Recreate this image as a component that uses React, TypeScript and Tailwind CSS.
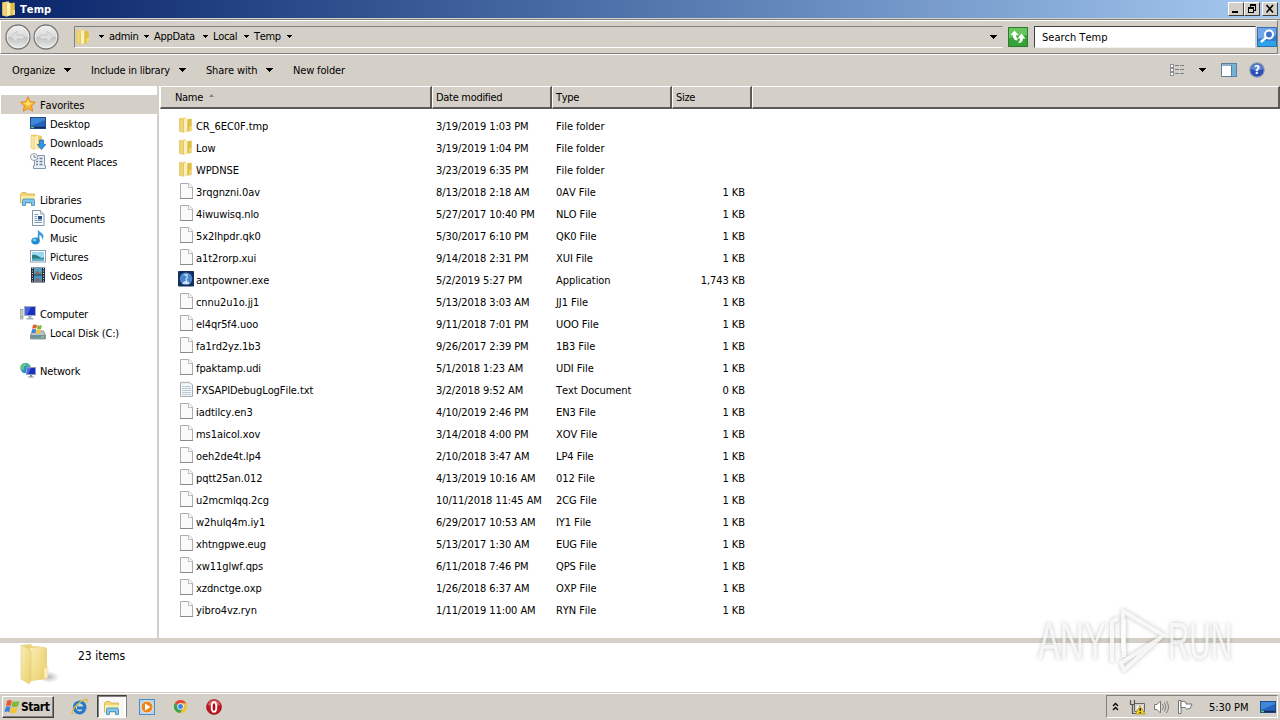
import React from "react";

type IconProps = { className?: string };
type IconC = (p: IconProps) => React.ReactElement;

const FolderIcon: IconC = ({ className = "" }) => (
  <svg viewBox="0 0 16 16" className={`h-4 w-4 shrink-0 ${className}`}>
    <path d="M6 3L13.500 1.500V14L6 15Z" fill="#e6c552" />
    <path d="M1.500 1.500L6 .5H8V15L6 15.500L1.500 14.500Z" fill="#f3dc83" />
    <path d="M6 2.500L9.500 1.500V14L6 15Z" fill="#fbf1bf" />
    <path d="M1.500 1.500L5.500 2.500V15.300L1.500 14.300Z" fill="#efd574" stroke="#d9bb58" strokeWidth=".5" />
    <path d="M9.500 2H13.500V13.800L9.500 14.200Z" fill="#e2be45" />
    <path d="M11.500 9H14V13.800H11.500Z" fill="#f1dc86" />
  </svg>
);

const PageIcon: IconC = ({ className = "" }) => (
  <svg viewBox="0 0 16 16" className={`h-4 w-4 shrink-0 ${className}`}>
    <path d="M2.500 .5H11L14.500 4V15.500H2.500Z" fill="#fafafa" stroke="#adadad" />
    <path d="M2 15.500H15" stroke="#8a8a8a" />
    <path d="M10.500 .500V4.500H14.500" fill="#fff" stroke="#bdbdbd" />
  </svg>
);

const TextFileIcon: IconC = ({ className = "" }) => (
  <svg viewBox="0 0 16 16" className={`h-4 w-4 shrink-0 ${className}`}>
    <path d="M2.500 1.500H12L14.500 4V15.500H2.500Z" fill="#f6f9fb" stroke="#a3a9ad" />
    <path d="M3 1.500H12" stroke="#c9c9c9" strokeDasharray="1 1" strokeWidth="2" />
    <path d="M4 5.500H13M4 7.500H13M4 9.500H13M4 11.500H13M4 13.500H13" stroke="#a9bcc9" strokeWidth=".8" />
  </svg>
);

const AppIcon: IconC = ({ className = "" }) => (
  <svg viewBox="0 0 16 16" className={`h-4 w-4 shrink-0 ${className}`}>
    <rect width="16" height="15.500" rx="1" fill="#142d5c" />
    <circle cx="8" cy="7.800" r="6.300" fill="#4a86ca" />
    <path d="M5.500 4Q8 1.800 10.500 4" stroke="#a6cdf0" fill="none" />
    <path d="M7 4.500Q9.500 4 9.300 6T8 8L8.700 10" stroke="#dcedfb" strokeWidth="1.100" fill="none" />
    <path d="M4.500 13Q5 10 8 10T11.500 13Z" fill="#cfe3f6" />
  </svg>
);

const StarIcon: IconC = () => (
  <svg viewBox="0 0 16 16" className="h-4 w-4 shrink-0">
    <path d="M8 .7L10.200 5.600L15.500 6.200L11.600 9.800L12.700 15.200L8 12.500L3.300 15.200L4.400 9.800L.500 6.200L5.800 5.600Z" fill="#fbb62e" stroke="#df8425" strokeWidth=".9" />
    <path d="M8 3L9.300 6.700L12.500 7L8 10L4 7L6.800 6.700Z" fill="#ffe36e" />
  </svg>
);

const DesktopIcon: IconC = ({ className = "" }) => (
  <svg viewBox="0 0 16 16" className={`h-4 w-4 shrink-0 ${className}`}>
    <rect x=".500" y="2.500" width="15" height="11" fill="#2462bd" stroke="#214a86" />
    <path d="M1 3H15V5L1 11Z" fill="#3f87d8" />
    <path d="M1 12.500H15" stroke="#152c58" strokeWidth="1.500" />
    <path d="M1 12.500H4" stroke="#67c276" strokeWidth="1.500" />
  </svg>
);

const DownloadsIcon: IconC = () => (
  <svg viewBox="0 0 16 16" className="h-4 w-4 shrink-0">
    <path d="M1 1L5 .5L12 2V14L5 15L1 14Z" fill="#eccb63" />
    <path d="M1 1L5 2.500V15.500L1 14Z" fill="#f7e59d" stroke="#d9bb58" strokeWidth=".5" />
    <path d="M5 2.500L8 1.500V14L5 15Z" fill="#fbf0bb" />
    <path d="M9.500 6H13.500V10.500H15.800L11.500 15.500L7.200 10.500H9.500Z" fill="#3294dd" stroke="#1b67ae" strokeWidth=".7" />
  </svg>
);

const RecentIcon: IconC = () => (
  <svg viewBox="0 0 16 16" className="h-4 w-4 shrink-0">
    <path d="M4.500 2.500H14.500V12.500H15.500V15.500H3.500V12.500H4.500Z" fill="#e8eef4" stroke="#8295a8" />
    <path d="M6 5.500H8M9.500 5.500H12.500M6 8.500H8M9.500 8.500H12.500M6 11.500H8M9.500 11.500H12.500" stroke="#6b8198" strokeWidth="1.300" />
    <circle cx="4" cy="4" r="3.500" fill="#f4f6f8" stroke="#91a0ae" />
    <path d="M4 2V4.300H6" fill="none" stroke="#586b7d" strokeWidth=".8" />
  </svg>
);

const LibrariesIcon: IconC = ({ className = "" }) => (
  <svg viewBox="0 0 16 16" className={`h-4 w-4 shrink-0 ${className}`}>
    <path d="M.5 3L2 1.500H6L7 3H14.500V12H.500Z" fill="#f0d776" stroke="#cfae4b" strokeWidth=".8" />
    <path d="M1 5H15V12H1Z" fill="#faeda8" />
    <path d="M2.500 14.500V9.500Q2.500 8 4 8H13Q14.500 8 14.500 9.500V14.500H11.500V11.500H5.500V14.500Z" fill="#7fc6ea" stroke="#3e8cbf" strokeWidth=".8" />
  </svg>
);

const DocumentIcon: IconC = () => (
  <svg viewBox="0 0 16 16" className="h-4 w-4 shrink-0">
    <path d="M2.500 .500H10.500L14 4V15.500H2.500Z" fill="#fbfdff" stroke="#8093a9" />
    <path d="M10.500 .500V4H14" fill="#dbe6f1" stroke="#8093a9" strokeWidth=".7" />
    <path d="M4.500 4.500H8.500M4.500 6.500H7M4.500 8.500H7M4.500 10.500H12M4.500 12.500H12" stroke="#7f9dbd" />
    <rect x="8" y="6" width="4" height="3.500" fill="#2b4f84" />
  </svg>
);

const MusicIcon: IconC = () => (
  <svg viewBox="0 0 16 16" className="h-4 w-4 shrink-0">
    <path d="M8 .5C9 3 13.500 4 13.500 7.500Q13.500 9 12 10.500Q12.500 7 9.500 6V12H7.500Z" fill="#3a9bd8" />
    <ellipse cx="5.500" cy="12" rx="4.200" ry="3.400" fill="#2089d2" />
    <ellipse cx="4.500" cy="11" rx="2" ry="1.400" fill="#7cc8f0" />
  </svg>
);

const PictureIcon: IconC = () => (
  <svg viewBox="0 0 16 16" className="h-4 w-4 shrink-0">
    <rect x=".500" y="2.500" width="15" height="11.500" fill="#fff" stroke="#8ea1b3" />
    <rect x="2" y="4" width="12" height="8.500" fill="#9bd8f1" />
    <path d="M2 7Q6 6 9 8.500T14 9V12.500H2Z" fill="#2d7d78" />
    <path d="M2 10.500H14V12.500H2Z" fill="#4cb0cd" />
  </svg>
);

const VideoIcon: IconC = () => (
  <svg viewBox="0 0 16 16" className="h-4 w-4 shrink-0">
    <rect x="1" y=".500" width="14" height="15" fill="#24303d" />
    <rect x="4" y="1" width="8" height="6.500" fill="#589fc4" />
    <rect x="4" y="8.500" width="8" height="6.500" fill="#4b94c6" />
    <path d="M5 6L7 3.500L9 6L11 5V7H5ZM5 13L7 10.500L11 13.500V14.500H5Z" fill="#8d6a5e" />
    <path d="M2.500 1V15M13.500 1V15" stroke="#d5e5ef" strokeDasharray="1 1.500" />
  </svg>
);

const ComputerIcon: IconC = () => (
  <svg viewBox="0 0 16 16" className="h-4 w-4 shrink-0">
    <rect x=".500" y="4.500" width="2.500" height="9.500" fill="#cbd5cb" stroke="#8d988d" strokeWidth=".7" />
    <path d="M1 11.500H2.500" stroke="#58b04f" />
    <rect x="4.500" y="1.500" width="11" height="9" fill="#1c2fc0" stroke="#a5afc4" />
    <path d="M5 2H11L7 10H5Z" fill="#4763df" />
    <path d="M8.500 11H11.500V13H13.500V14.500H6.500V13H8.500Z" fill="#a6afbd" />
  </svg>
);

const Flag: IconC = ({ className = "" }) => (
  <svg viewBox="0 0 16 16" className={`shrink-0 ${className}`}>
    <path d="M3.200 1.500Q5.500 .2 7.800 1.700L6.700 7Q4.500 5.800 2 7Z" fill="#e9592b" />
    <path d="M8.600 2.200Q11 3.400 15.500 2L14 7.300Q10.500 8.700 7.500 7.400Z" fill="#7dba37" />
    <path d="M1.800 7.900Q4.200 6.800 6.500 8L5.300 13.200Q3 12 .300 13.200Z" fill="#3f83d9" />
    <path d="M7.300 8.500Q10 9.800 13.600 8.300L12 13.600Q9 15 6.100 13.700Z" fill="#f6c32c" />
  </svg>
);

const DiskIcon: IconC = () => (
  <svg viewBox="0 0 16 16" className="h-4 w-4 shrink-0">
    <path d="M2.500 7H13.500L15.500 11V15H.500V11Z" fill="#b9c3c8" stroke="#74858d" strokeWidth=".8" />
    <path d="M1 11H15V14.600H1Z" fill="#6f9198" />
    <path d="M11 13H14" stroke="#7be067" strokeWidth="1.300" />
    <path d="M3 1Q5 0 7 1L6.300 4.500Q4.500 4 2.200 4.700Z" fill="#e9592b" />
    <path d="M7.500 1.300Q9.500 2.200 12 1L11 5Q9 5.800 6.900 4.900Z" fill="#7dba37" />
    <path d="M2 5.300Q4 4.500 6 5.300L5.300 9H1.500Z" fill="#3f83d9" />
    <path d="M6.700 5.600Q9 6.500 11 5.600L10 9.300H6Z" fill="#f6c32c" />
  </svg>
);

const NetworkIcon: IconC = () => (
  <svg viewBox="0 0 16 16" className="h-4 w-4 shrink-0">
    <circle cx="5.500" cy="6" r="5.200" fill="#2a8fc9" />
    <path d="M1 4Q3 .500 6 1L7 3L4 5L3 9Q0 7 1 4ZM7 1L10 3L8 5Z" fill="#64c77a" />
    <rect x="6.500" y="5.500" width="9" height="7" fill="#1a2fc6" stroke="#8f9dbb" />
    <path d="M7 6H11L8 12H7Z" fill="#536ce0" />
    <path d="M10 13H12V14.500H14V15.500H8V14.500H10Z" fill="#8893a8" />
  </svg>
);

function Caret({ className = "" }: IconProps) {
  return (
    <svg viewBox="0 0 7 4" className={`h-1 w-[7px] shrink-0 ${className}`} shapeRendering="crispEdges">
      <path d="M0 0H7V1H6V2H5V3H4V4H3V3H2V2H1V1H0Z" fill="#000" />
    </svg>
  );
}

function SmallCaret() {
  return (
    <svg viewBox="0 0 5 3" className="h-[3px] w-[5px] shrink-0" shapeRendering="crispEdges">
      <path d="M0 0H5V1H4V2H3V3H2V2H1V1H0Z" fill="#000" />
    </svg>
  );
}

function NavButton({ back }: { back?: boolean }) {
  return (
    <svg viewBox="0 0 26 26" className="h-[26px] w-[26px] shrink-0">
      <defs>
        <linearGradient id={back ? "nb" : "nf"} x1="0" y1="0" x2="0" y2="1">
          <stop offset="0" stopColor="#f1f1f0" />
          <stop offset=".48" stopColor="#dadada" />
          <stop offset=".52" stopColor="#c3c3c2" />
          <stop offset="1" stopColor="#ececeb" />
        </linearGradient>
      </defs>
      <circle cx="13" cy="13" r="12" fill={back ? "url(#nb)" : "url(#nf)"} stroke="#77777a" strokeWidth="1.300" />
      <circle cx="13" cy="13" r="10.800" fill="none" stroke="#f3f3f3" strokeWidth=".8" />
      <path
        d={back ? "M6 13L12 7V11H19V15H12V19Z" : "M20 13L14 7V11H7V15H14V19Z"}
        fill="#dedede"
        stroke="#c2c2c2"
        strokeWidth=".8"
      />
    </svg>
  );
}

const files: [string, string, string, string][] = [
  ["CR_6EC0F.tmp", "3/19/2019 1:03 PM", "File folder", ""],
  ["Low", "3/19/2019 1:04 PM", "File folder", ""],
  ["WPDNSE", "3/23/2019 6:35 PM", "File folder", ""],
  ["3rqgnzni.0av", "8/13/2018 2:18 AM", "0AV File", "1 KB"],
  ["4iwuwisq.nlo", "5/27/2017 10:40 PM", "NLO File", "1 KB"],
  ["5x2lhpdr.qk0", "5/30/2017 6:10 PM", "QK0 File", "1 KB"],
  ["a1t2rorp.xui", "9/14/2018 2:31 PM", "XUI File", "1 KB"],
  ["antpowner.exe", "5/2/2019 5:27 PM", "Application", "1,743 KB"],
  ["cnnu2u1o.jj1", "5/13/2018 3:03 AM", "JJ1 File", "1 KB"],
  ["el4qr5f4.uoo", "9/11/2018 7:01 PM", "UOO File", "1 KB"],
  ["fa1rd2yz.1b3", "9/26/2017 2:39 PM", "1B3 File", "1 KB"],
  ["fpaktamp.udi", "5/1/2018 1:23 AM", "UDI File", "1 KB"],
  ["FXSAPIDebugLogFile.txt", "3/2/2018 9:52 AM", "Text Document", "0 KB"],
  ["iadtilcy.en3", "4/10/2019 2:46 PM", "EN3 File", "1 KB"],
  ["ms1aicol.xov", "3/14/2018 4:00 PM", "XOV File", "1 KB"],
  ["oeh2de4t.lp4", "2/10/2018 3:47 AM", "LP4 File", "1 KB"],
  ["pqtt25an.012", "4/13/2019 10:16 AM", "012 File", "1 KB"],
  ["u2mcmlqq.2cg", "10/11/2018 11:45 AM", "2CG File", "1 KB"],
  ["w2hulq4m.iy1", "6/29/2017 10:53 AM", "IY1 File", "1 KB"],
  ["xhtngpwe.eug", "5/13/2017 1:30 AM", "EUG File", "1 KB"],
  ["xw11glwf.qps", "6/11/2018 7:46 PM", "QPS File", "1 KB"],
  ["xzdnctge.oxp", "1/26/2018 6:37 AM", "OXP File", "1 KB"],
  ["yibro4vz.ryn", "1/11/2019 11:00 AM", "RYN File", "1 KB"],
];

function fileIcon(type: string): IconC {
  if (type === "File folder") return FolderIcon;
  if (type === "Application") return AppIcon;
  if (type === "Text Document") return TextFileIcon;
  return PageIcon;
}

const tree: ([string, IconC, boolean] | null)[] = [
  ["Favorites", StarIcon, true],
  ["Desktop", DesktopIcon, false],
  ["Downloads", DownloadsIcon, false],
  ["Recent Places", RecentIcon, false],
  null,
  ["Libraries", LibrariesIcon, true],
  ["Documents", DocumentIcon, false],
  ["Music", MusicIcon, false],
  ["Pictures", PictureIcon, false],
  ["Videos", VideoIcon, false],
  null,
  ["Computer", ComputerIcon, true],
  ["Local Disk (C:)", DiskIcon, false],
  null,
  ["Network", NetworkIcon, true],
];

function WinButton({ children, className = "" }: { children: React.ReactNode; className?: string }) {
  return (
    <div className={`flex h-[14px] w-4 items-center justify-center border border-t-white border-r-[#404040] border-b-[#404040] border-l-white bg-[#d4d0c8] ${className}`}>
      <svg viewBox="0 0 12 12" className="h-3 w-3" fill="none" stroke="#000" shapeRendering="crispEdges">{children}</svg>
    </div>
  );
}

function TitleBar() {
  return (
    <div className="flex h-[18px] items-center bg-linear-to-r from-[#0a246a] to-[#a6caf0] pr-0.5 pl-px">
      <FolderIcon />
      <span className="mt-0.5 ml-[3px] flex-1 text-[11px] font-bold text-white tracking-[0.1px]">Temp</span>
      <WinButton><path d="M2 9H8" strokeWidth="2" /></WinButton>
      <WinButton>
        <path d="M4 2H10M4.500 2V4M9.500 2V7.500H8" strokeWidth="1" /><path d="M4 2H10M2 5H8" strokeWidth="2" /><path d="M2.500 5V9.500H7.500V5" />
      </WinButton>
      <WinButton className="ml-0.5"><path d="M2.500 2L9 9.500M9 2L2.500 9.500" strokeWidth="1.600" shapeRendering="auto" /></WinButton>
    </div>
  );
}

function AddressBar() {
  return (
    <div className="flex h-[36px] border-t border-b border-t-[#808080] border-b-white">
      <div className="flex flex-1 items-center border border-t-white border-r-[#808080] border-b-[#808080] border-l-white pl-1">
        <div className="flex w-[69px] gap-0.5">
          <NavButton back />
          <NavButton />
        </div>
        <div className="flex h-[22px] flex-1 items-center border border-t-[#808080] border-r-[#d4d0c8] border-b-white border-l-[#808080]">
          <FolderIcon />
          <div className="ml-2 grid grid-cols-[10px_45px_59px_41px_43px] items-center">
            <SmallCaret />
            {["admin", "AppData", "Local", "Temp"].map((t) => (
              <div key={t} className="flex items-center justify-between pr-[5px]">
                <span>{t}</span>
                <SmallCaret />
              </div>
            ))}
          </div>
          <Caret className="mr-[5px] ml-auto" />
        </div>
        <div className="ml-[5px] h-5 w-5 border border-[#2d7b2e] bg-[#36a238]">
          <svg viewBox="0 0 18 18" className="h-[18px] w-[18px]">
            <path d="M0 0H18V7L0 10Z" fill="#68c45d" />
            <path d="M5.500 2.500L1.500 7H4V9Q5 12.500 8.500 12.500V10Q7 10 7 7H9.500ZM12.500 5.500L8.500 10.500H11Q11 14 9 15Q14 15 14 10.500H16.500Z" fill="#fff" />
          </svg>
        </div>
        <div className="ml-[6px] flex h-[22px] w-[222px] items-center border border-t-[#404040] border-r-[#d4d0c8] border-b-[#f4f2ee] border-l-[#404040] bg-white pl-[7px]">
          <span className="mt-0.5 tracking-[0px]">Search Temp</span>
        </div>
        <div className="ml-px h-5 w-5 bg-[#357bd6]">
          <svg viewBox="0 0 20 20" className="h-5 w-5">
            <path d="M0 0H20V8L0 12Z" fill="#6fa7ea" />
            <path d="M0 14H20V20H0Z" fill="#2da3e7" />
            <circle cx="12" cy="7.500" r="4" fill="#3c73cf" stroke="#fff" strokeWidth="2" />
            <path d="M9 10.500L4 15" stroke="#fff" strokeWidth="2.400" />
            <path d="M.5 .500H19.500V19.500H.500Z" fill="none" stroke="#295ea9" strokeWidth=".8" />
          </svg>
        </div>
      </div>
      <div className="w-[2px]" />
    </div>
  );
}

function Toolbar() {
  return (
    <div className="flex h-[31px] items-center pr-[15px] pl-3 tracking-[-0.16px]">
      <div className="flex w-[79px] items-center"><span className="w-[52px]">Organize</span><Caret /></div>
      <div className="flex w-[115px] items-center"><span className="w-[88px] whitespace-nowrap tracking-[-0.24px]">Include in library</span><Caret /></div>
      <div className="flex w-[87px] items-center"><span className="w-[60px] whitespace-nowrap">Share with</span><Caret /></div>
      <span>New folder</span>
      <svg viewBox="0 0 16 14" className="ml-auto h-[14px] w-4" shapeRendering="crispEdges">
        <path d="M.500 1.500H3.500V4.500H.500ZM.500 5.500H3.500V8.500H.500ZM.500 9.500H3.500V12.500H.500Z" fill="#fff" stroke="#8a8f9a" />
        <path d="M5 2.500H15M5 6.500H15M5 10.500H15" stroke="#7a7f88" strokeDasharray="4 1" />
      </svg>
      <Caret className="ml-[13px]" />
      <svg viewBox="0 0 16 14" className="ml-[15px] h-[14px] w-4" shapeRendering="crispEdges">
        <rect x=".500" y=".500" width="15" height="13" fill="#fff" stroke="#5c7fa0" />
        <path d="M1 2H15" stroke="#8bb2ce" strokeWidth="2" />
        <rect x="11" y="2" width="4" height="11" fill="#6fb4d8" />
        <path d="M10.500 2V13" stroke="#5c7fa0" />
      </svg>
      <svg viewBox="0 0 16 16" className="ml-3 h-4 w-4">
        <circle cx="8" cy="8" r="7.200" fill="#2850b8" stroke="#8f9bb5" strokeWidth="1.200" />
        <path d="M2 7Q3 2 8 2T14 7Q8 10 2 7Z" fill="#5d83d8" />
        <text x="8" y="12.200" textAnchor="middle" fill="#fff" fontSize="11.500" fontWeight="700" letterSpacing="0">?</text>
      </svg>
    </div>
  );
}

function HeaderCell({ children, className = "" }: { children?: React.ReactNode; className?: string }) {
  return (
    <div className={`flex h-[23px] items-center border-t border-r-2 border-b-2 border-l border-t-white border-r-[#5a5a58] border-b-[#5a5a58] border-l-white bg-[#d4d0c8] pt-0.5 ${className}`}>
      {children}
    </div>
  );
}

function FileList() {
  return (
    <div className="flex-1 bg-white">
      <div className="grid grid-cols-[272px_120px_120px_80px_1fr]">
        <HeaderCell className="pl-[14px]">
          Name
          <svg viewBox="0 0 5 3" className="mb-1 ml-[6px] h-[3px] w-[5px]"><path d="M0 3L2.500 0L5 3Z" fill="#858585" /></svg>
        </HeaderCell>
        <HeaderCell className="pl-[3px]">Date modified</HeaderCell>
        <HeaderCell className="pl-[3px]">Type</HeaderCell>
        <HeaderCell className="pl-[3px]">Size</HeaderCell>
        <HeaderCell />
      </div>
      <div className="pt-[6px] tracking-[-0.07px]">
        {files.map(([name, date, type, size]) => {
          const Icon = fileIcon(type);
          return (
            <div key={name} className="grid h-[22px] grid-cols-[276px_120px_115px_74px] items-center">
              <div className="flex items-center pl-[18px]">
                <Icon className="mb-0.5" />
                <span className="mt-px ml-0.5">{name}</span>
              </div>
              <span className="mt-0.5">{date}</span>
              <span className="mt-0.5">{type}</span>
              <span className="mt-0.5 text-right">{size}</span>
            </div>
          );
        })}
      </div>
    </div>
  );
}

function Sidebar() {
  return (
    <div className="w-[157px] bg-white pt-[9px] tracking-[-0.15px]">
      {tree.map((row, i) => {
        if (!row) return <div key={i} className="h-[19px]" />;
        const [label, Icon, top] = row;
        return (
          <div key={i} className={`ml-px flex h-[19px] items-center ${top ? "pl-[19px]" : "pl-[29px]"} ${i === 0 ? "bg-[#d4d0c8]" : ""}`}>
            <Icon />
            <span className="mt-0.5 ml-1">{label}</span>
          </div>
        );
      })}
    </div>
  );
}

function Details() {
  return (
    <div className="flex h-[49px] bg-white pl-5">
      <svg viewBox="0 0 40 44" className="h-11 w-10">
        <defs>
          <linearGradient id="fold" x1="0" y1="0" x2="1" y2="1">
            <stop offset="0" stopColor="#f9edb4" />
            <stop offset="1" stopColor="#ecd06d" />
          </linearGradient>
          <radialGradient id="shade"><stop offset="0" stopColor="#888" stopOpacity=".6" /><stop offset="1" stopColor="#999" stopOpacity="0" /></radialGradient>
        </defs>
        <ellipse cx="29" cy="34" rx="10" ry="6" fill="url(#shade)" />
        <path d="M2 2L11 1L12 3L25 4L27 6V36L11 38Z" fill="#ecd380" />
        <path d="M10 5L24 4V35L10 38Z" fill="url(#fold)" />
        <path d="M24 25L28 24V34L24 36Z" fill="#f8efbd" stroke="#e4cb78" strokeWidth=".4" />
        <path d="M1 2L9 6Q11 7 11 10V38L9 41L1 36Z" fill="url(#fold)" stroke="#dfc66e" strokeWidth=".5" />
      </svg>
      <span className="mt-[5px] ml-[18px] text-[12px] leading-4 tracking-[0px]">23 items</span>
    </div>
  );
}

function Taskbar() {
  return (
    <div className="flex h-[28px] items-center border-t border-[#d4d0c8] bg-[#d4d0c8] shadow-[inset_0_1px_0_#fff]">
      <div className="ml-0.5 flex h-[22px] w-[52px] items-center border border-t-white border-r-[#404040] border-b-[#404040] border-l-white pl-px shadow-[inset_-1px_-1px_0_#808080]">
        <Flag className="h-4 w-4" />
        <span className="mt-0.5 ml-px text-[12px] font-bold tracking-[-0.45px]">Start</span>
      </div>
      <svg viewBox="0 0 18 18" className="ml-[17px] h-[18px] w-[18px]">
        <path d="M13.500 11.500Q12 15 8.500 15Q3.500 14.500 3.500 9.500T9 4Q14 4.500 14 10H6" fill="none" stroke="#2478c9" strokeWidth="3" />
        <path d="M6 8Q7 5 10 5" stroke="#6ec3f2" strokeWidth="1.200" fill="none" />
        <path d="M2.500 15.500Q-1 16 3.500 9.500Q9 3 14 1.500Q18 .500 15 5" fill="none" stroke="#e8b62c" strokeWidth="1.300" />
      </svg>
      <div className="ml-2 flex h-[23px] w-[30px] items-center justify-center border border-t-[#404040] border-r-[#808080] border-b-white border-l-[#404040] bg-[#f8f7f5] shadow-[inset_1px_1px_0_#808080,inset_-2px_0_0_#fff]">
        <LibrariesIcon className="mt-0.5" />
      </div>
      <svg viewBox="0 0 16 16" className="ml-3 h-4 w-4">
        <rect x=".500" y=".500" width="15" height="15" fill="#b5d5ef" stroke="#4d8dc8" />
        <circle cx="8" cy="8" r="6" fill="#ef851a" stroke="#fff" strokeWidth=".7" />
        <path d="M6 4.500L11.500 8L6 11.500Z" fill="#fff" />
      </svg>
      <svg viewBox="0 0 16 16" className="ml-[18px] h-[15px] w-[15px]">
        <circle cx="8" cy="8" r="7" fill="#f6c42a" />
        <path d="M8 8L1.900 4.500A7 7 0 0 1 14.100 4.500H8Z" fill="#df493a" />
        <path d="M1.900 4.500A7 7 0 0 0 7.500 15L11 9.500L8 8Z" fill="#35a056" />
        <circle cx="8" cy="8" r="3.200" fill="#3f82e5" stroke="#fff" />
      </svg>
      <svg viewBox="0 0 16 16" className="ml-[18px] h-4 w-4">
        <circle cx="8" cy="8" r="7.500" fill="#c01820" stroke="#8d1015" strokeWidth=".6" />
        <path d="M2 6Q3 1.500 8 1.300T14 6Q8 8 2 6Z" fill="#e36065" />
        <ellipse cx="8" cy="8" rx="2.300" ry="4.800" fill="#aa1119" stroke="#fff" strokeWidth="1.900" />
      </svg>
      <div className="mr-0.5 ml-auto flex h-[23px] w-[172px] items-center border border-t-[#808080] border-r-white border-b-white border-l-[#808080]">
        <svg viewBox="0 0 7 9" className="ml-[5px] h-[9px] w-[7px]" fill="none" stroke="#000" strokeWidth="1.300">
          <path d="M1 4L3.500 1.500L6 4M1 8L3.500 5.500L6 8" />
        </svg>
        <svg viewBox="0 0 17 16" className="ml-[10px] h-4 w-[17px] shrink-0">
          <path d="M5.500 4.500H15.500V12.500H5.500Z" fill="#e9e9e5" stroke="#666" />
          <path d="M7 6H14V11H7Z" fill="#fff" stroke="#aaa" strokeWidth=".7" />
          <path d="M1.500 1V5.500H5.500V1M3.500 5V14.500H8" fill="none" stroke="#555" strokeWidth="1.200" />
          <path d="M11 6.500L16 15H6.500Z" fill="#f5d321" stroke="#a28714" strokeWidth=".7" />
          <path d="M11.200 9V12M11.200 13V14.200" stroke="#000" strokeWidth="1.200" />
        </svg>
        <svg viewBox="0 0 17 16" className="ml-[7px] h-4 w-[17px] shrink-0" fill="none" stroke="#777">
          <path d="M1.500 5.500H4L7.500 2V14L4 10.500H1.500Z" fill="#fff" />
          <path d="M9.500 5Q11.500 8 9.500 11M11.500 3.500Q14.500 8 11.500 12.500M13.500 2Q17.500 8 13.500 14" strokeWidth=".9" />
        </svg>
        <svg viewBox="0 0 16 16" className="ml-[7px] h-4 w-4 shrink-0" fill="#fff" stroke="#666">
          <path d="M1.500 1.500H4V14.500H1.500Z" strokeWidth=".9" />
          <path d="M4 2.500Q7 1.500 9 3.500V5H15L13 9.500Q9 11 8 8.500H4Z" strokeWidth=".9" />
        </svg>
        <span className="mt-0.5 ml-4 w-10 whitespace-nowrap tracking-[-0.07px]">5:30 PM</span>
        <DesktopIcon className="ml-[11px]" />
      </div>
    </div>
  );
}

function Watermark() {
  return (
    <svg viewBox="0 0 212 72" className="absolute top-[604px] left-[1034px] h-[72px] w-[212px] drop-shadow-[0_0_2px_rgba(0,0,0,0.3)]">
      <g fill="#fff" fillOpacity=".75" fontFamily="Liberation Sans Narrow, Liberation Sans, sans-serif" fontSize="52" letterSpacing="0">
        <text x="4" y="55" textLength="68" lengthAdjust="spacingAndGlyphs">ANY</text>
        <text x="134" y="55" textLength="64" lengthAdjust="spacingAndGlyphs">RUN</text>
      </g>
      <g fill="none" stroke="#fff" strokeOpacity=".8" strokeWidth="4" strokeLinejoin="round">
        <path d="M84 14L78 18V58" />
        <path d="M89 47V7L129 31L90 66L87 59L125 35" />
        <path d="M90 16V53" />
      </g>
    </svg>
  );
}

export default function App() {
  return (
    <div className="relative flex h-[720px] w-[1280px] flex-col overflow-hidden bg-[#d4d0c8] font-['DejaVu_Sans_Condensed','DejaVu_Sans',sans-serif] text-[11px] leading-[13px] tracking-[-0.3px] text-black [font-kerning:none] [font-stretch:condensed]">
      <TitleBar />
      <div className="h-px bg-[#d4d0c8]" />
      <AddressBar />
      <Toolbar />
      <div className="flex h-[553px]">
        <Sidebar />
        <div className="w-[3px] border-r border-white bg-[#d4d0c8]" />
        <FileList />
      </div>
      <div className="h-[5px] bg-[#d4d0c8]" />
      <Details />
      <Taskbar />
      <Watermark />
    </div>
  );
}
